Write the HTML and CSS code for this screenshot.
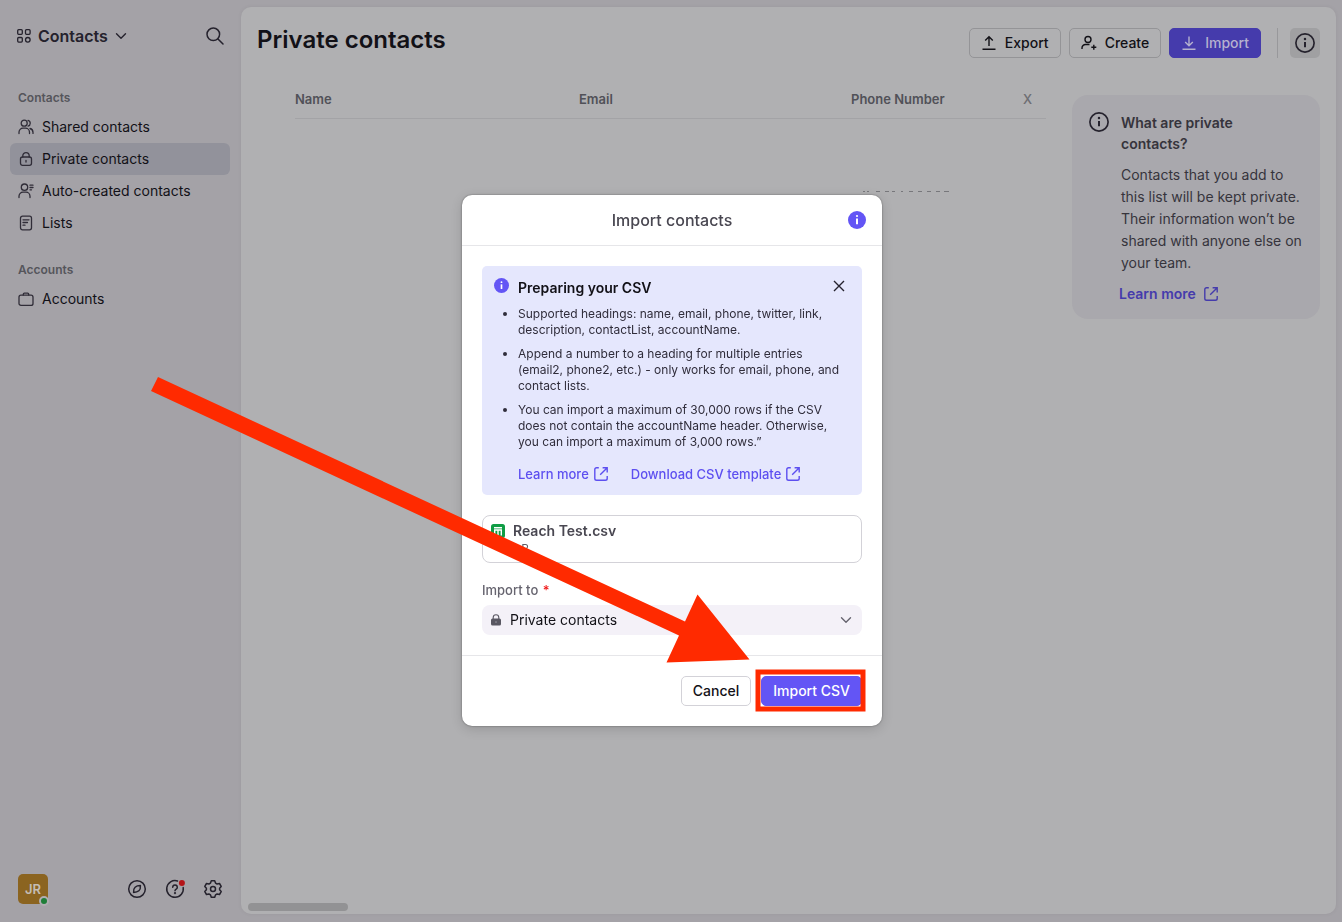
FILE: index.html
```html
<!DOCTYPE html>
<html lang="en">
<head>
<meta charset="utf-8">
<title>Private contacts</title>
<link rel="stylesheet" href="styles.css">
</head>
<body>
<svg class="defs" aria-hidden="true">
  <symbol id="info" viewBox="0 0 18 18"><circle cx="9" cy="9" r="8.2" fill="none" stroke="currentColor" stroke-width="1.5"/><path d="M9 8v4.8" fill="none" stroke="currentColor" stroke-width="1.8"/><circle cx="9" cy="5.4" r="1.1" fill="currentColor"/></symbol>
  <symbol id="info-solid" viewBox="0 0 18 18"><circle cx="9" cy="9" r="9" fill="#6355f5"/><path d="M9 7.6v5.6" stroke="#fff" stroke-width="2"/><circle cx="9" cy="5" r="1.1" fill="#fff"/></symbol>
  <symbol id="external" viewBox="0 0 14 14"><path d="M4.800.8H2.600Q.8.800.8 2.600V5M.8 8v3.400q0 1.800 1.800 1.800h8.800q1.800 0 1.800-1.800V9M8.600.8h4.600v4.600M13 1 6.200 7.800M.8 5v3" fill="none" stroke="currentColor" stroke-width="1.400"/></symbol>
  <symbol id="chevron" viewBox="0 0 12 12"><path d="m1.500 3.800 4.500 4.500 4.500-4.500" fill="none" stroke="currentColor" stroke-width="1.400" stroke-linecap="round" stroke-linejoin="round"/></symbol>
</svg>

<div class="app">
  <aside class="sidebar">
    <div class="sidebar-head">
      <button class="switcher" type="button">
        <svg width="14" height="14" viewBox="0 0 14 14" fill="none" stroke="currentColor" stroke-width="1.3"><rect x=".7" y=".7" width="4.600" height="4.600" rx="1"/><rect x="8.500" y=".7" width="4.600" height="4.600" rx="1"/><rect x=".7" y="8.500" width="4.600" height="4.600" rx="1"/><circle cx="10.800" cy="10.800" r="2.300"/></svg>
        <span>Contacts</span>
        <svg width="12" height="12"><use href="#chevron"/></svg>
      </button>
      <button class="icon-btn" type="button" aria-label="Search">
        <svg width="18" height="18" viewBox="0 0 18 18" fill="none" stroke="currentColor" stroke-width="1.500" stroke-linecap="round"><circle cx="7.300" cy="7.300" r="6.300"/><path d="m12 12 5 5"/></svg>
      </button>
    </div>
    <nav class="nav">
      <h2>Contacts</h2>
      <a href="#shared"><svg width="16" height="16" viewBox="0 0 16 16"><circle cx="6.200" cy="4.200" r="3"/><path d="M1 14.500v-1.300a4 4 0 0 1 4-4h2.500a4 4 0 0 1 4 4v1.300M10 1.300a3 3 0 0 1 0 5.800M12 9.500a4 4 0 0 1 3 3.900v1"/></svg>Shared contacts</a>
      <a href="#private" class="active"><svg width="16" height="16" viewBox="0 0 16 16"><rect x="2.500" y="6" width="11" height="8.300" rx="2"/><path d="M4.800 6V4.800a3.200 3.200 0 0 1 6.400 0V6M8 9.300v1.700"/></svg>Private contacts</a>
      <a href="#auto"><svg width="16" height="16" viewBox="0 0 16 16"><circle cx="6.500" cy="4.200" r="3.200"/><path d="M1 14.500v-1.300a4 4 0 0 1 4-4h3a4 4 0 0 1 4 4v1.300M12 2.200h3M12 4.500h3M12 6.800h1.500"/></svg>Auto-created contacts</a>
      <a href="#lists"><svg width="16" height="16" viewBox="0 0 16 16"><rect x="2.500" y="1.200" width="11" height="13.600" rx="2"/><path d="M5 4.800h6M5 7.500h4.500M5 10.200h2"/></svg>Lists</a>
      <h2>Accounts</h2>
      <a href="#accounts"><svg width="16" height="16" viewBox="0 0 16 16"><rect x="1" y="4.200" width="14" height="10.200" rx="2"/><path d="M5.300 4V3.200q0-1 1-1h3.400q1 0 1 1V4"/></svg>Accounts</a>
    </nav>
    <div class="sidebar-foot">
      <div class="avatar">JR<span class="presence"></span></div>
      <button class="icon-btn" type="button" aria-label="Explore"><svg width="20" height="20" viewBox="0 0 20 20" fill="none" stroke="currentColor" stroke-width="1.500" stroke-linejoin="round"><circle cx="10" cy="10" r="8.300"/><path d="M13.400 6.600q.3 3.600-1.500 5.200t-5.300 1.600q-.3-3.600 1.500-5.200t5.300-1.600Z"/></svg></button>
      <button class="icon-btn" type="button" aria-label="Help"><svg width="20" height="20" viewBox="0 0 20 20" fill="none" stroke="currentColor" stroke-width="1.500" stroke-linecap="round"><path d="M12.500 2A8.300 8.300 0 1 0 18.200 8.500"/><path d="M7.700 8.200a2.300 2.300 0 1 1 3.500 2q-1.200.7-1.200 1.600"/><circle cx="10" cy="14.200" r=".4"/><circle cx="16.900" cy="4" r="3" fill="#b41418" stroke="none"/></svg></button>
      <button class="icon-btn" type="button" aria-label="Settings"><svg width="20" height="20" viewBox="0 0 20 20" fill="none" stroke="currentColor" stroke-width="1.500" stroke-linejoin="round"><path d="M8.300 1.800h3.400l.8 2.300 1.600.9 2.400-.5 1.700 2.900L16.600 9.200v1.600l1.600 1.800-1.700 2.900-2.400-.5-1.600.9-.8 2.300H8.300l-.8-2.300-1.600-.9-2.400.5-1.700-2.900 1.600-1.800V9.200L1.800 7.400l1.700-2.900 2.400.5 1.600-.9Z"/><circle cx="10" cy="10" r="2.500"/></svg></button>
    </div>
  </aside>

  <main class="panel">
    <header class="panel-head">
      <h1>Private contacts</h1>
      <div class="actions">
        <button class="btn dim" type="button"><svg width="16" height="16" viewBox="0 0 16 16"><path d="M8 11V2M4.200 5.500 8 1.700l3.800 3.800M1.500 14.200h13"/></svg>Export</button>
        <button class="btn dim" type="button"><svg width="16" height="16" viewBox="0 0 16 16"><circle cx="7" cy="4.500" r="3"/><path d="M1 14v-1a3.500 3.500 0 0 1 3.500-3.500h4M12.800 9.800v5M10.300 12.300h5"/></svg>Create</button>
        <button class="btn dim-primary" type="button"><svg width="16" height="16" viewBox="0 0 16 16"><path d="M8 1.500v9M4.200 7 8 10.800 11.800 7M1.500 14.200h13"/></svg>Import</button>
        <span class="divider"></span>
        <button class="info-toggle" type="button" aria-label="About this page"><svg width="20" height="20"><use href="#info"/></svg></button>
      </div>
    </header>
    <div class="content">
      <div class="table-wrap">
        <table>
          <colgroup><col class="c-name"><col class="c-email"><col class="c-phone"><col></colgroup>
          <thead><tr><th>Name</th><th>Email</th><th>Phone Number</th><th class="faded">X</th></tr></thead>
          <tbody><tr><td></td><td></td><td><svg width="90" height="3" viewBox="0 0 90 3"><path d="M1 1.500h2M5 1.500h2M14 1.500h4M23 1.500h4M30 1.500h3M39 1.500h2M47 1.500h4M56 1.500h4M65 1.500h4M74 1.500h4M82 1.500h5" stroke="#77777b" fill="none"/></svg></td><td></td></tr></tbody>
        </table>
      </div>
      <section class="help">
        <svg width="20" height="20"><use href="#info"/></svg>
        <div>
          <h2>What are private contacts?</h2>
          <p>Contacts that you add to this list will be kept private. Their information won’t be shared with anyone else on your team.</p>
          <a href="#learn">Learn more <svg width="14" height="14"><use href="#external"/></svg></a>
        </div>
      </section>
    </div>
    <div class="scroll-thumb"></div>
  </main>
</div>

<div class="overlay">
  <section class="modal" role="dialog" aria-labelledby="modal-title">
    <header class="modal-head">
      <h2 id="modal-title">Import contacts</h2>
      <button type="button" aria-label="Information"><svg width="18" height="18"><use href="#info-solid"/></svg></button>
    </header>
    <div class="modal-body">
      <div class="callout">
        <svg class="callout-icon" width="15" height="15"><use href="#info-solid"/></svg>
        <div class="callout-main">
          <h3>Preparing your CSV</h3>
          <ul>
            <li>Supported headings: name, email, phone, twitter, link, description, contactList, accountName.</li>
            <li>Append a number to a heading for multiple entries (email2, phone2, etc.) - only works for email, phone, and contact lists.</li>
            <li>You can import a maximum of 30,000 rows if the CSV does not contain the accountName header. Otherwise, you can import a maximum of 3,000 rows.”</li>
          </ul>
          <div class="links">
            <a href="#learn-csv">Learn more <svg width="14" height="14"><use href="#external"/></svg></a>
            <a href="#template">Download CSV template <svg width="14" height="14"><use href="#external"/></svg></a>
          </div>
        </div>
        <button class="close" type="button" aria-label="Dismiss"><svg width="12" height="12" viewBox="0 0 12 12"><path d="m1 1 10 10M11 1 1 11" stroke="#25222e" stroke-width="1.400"/></svg></button>
      </div>
      <div class="file">
        <svg width="14" height="14" viewBox="0 0 14 14"><rect width="14" height="14" rx="2.500" fill="#0f9d45"/><path d="M3 3.700h8M3 6h8M3.700 6v5.500M7 6v5.500M10.300 6v5.500" stroke="#fff" stroke-width="1.400"/></svg>
        <div><strong>Reach Test.csv</strong><small>1 B</small></div>
      </div>
      <label for="target">Import to <span>*</span></label>
      <div class="select">
        <svg class="lock" width="10" height="12" viewBox="0 0 10 12"><rect y="4.500" width="10" height="7" rx="1.500" fill="#595762"/><path d="M2.200 5V3.600a2.800 2.800 0 0 1 5.600 0V5" fill="none" stroke="#595762" stroke-width="1.100"/><path d="M5 7.300v1.500" stroke="#a9a6b0"/></svg>
        <select id="target"><option>Private contacts</option></select>
        <svg class="caret" width="12" height="12"><use href="#chevron"/></svg>
      </div>
    </div>
    <footer class="modal-foot">
      <button class="btn" type="button">Cancel</button>
      <button class="btn primary" type="button">Import CSV</button>
    </footer>
  </section>
</div>

<svg class="annotation" aria-hidden="true">
  <path d="M158 377 685 621.500 697.500 594.500 749.500 659.500 666.500 662.500 679 635.500 151 391Z" fill="#ff2a00"/>
  <rect x="758" y="672" width="105" height="37" fill="none" stroke="#ff2a00" stroke-width="5"/>
</svg>
</body>
</html>
```
FILE: styles.css
```css
* { box-sizing: border-box; }
body { margin: 0; font: 14px/20px Inter, sans-serif; color: #121117; background: #a4a2a7; }
h1, h2, h3, p, ul { margin: 0; padding: 0; }
button, select { font: inherit; color: inherit; }
button { border: 0; padding: 0; background: none; }
a { color: inherit; text-decoration: none; }
svg { flex: none; display: block; }
.defs { position: absolute; width: 0; height: 0; }

.app { display: grid; grid-template-columns: 241px 1fr; height: 100vh; padding: 7px 6px 8px 0; }

.sidebar { display: flex; flex-direction: column; padding: 19px 11px 6px 10px; }
.sidebar-head { display: flex; justify-content: space-between; align-items: center; height: 20px; padding: 0 6px 0 7px; color: #25222d; }
.switcher { display: flex; align-items: center; gap: 7px; font-size: 16px; font-weight: 600; }
.icon-btn { color: #25222d; }
.nav { display: flex; flex-direction: column; margin-top: 40px; }
.nav h2 { padding: 3px 8px 4px; font-size: 12px; line-height: 18px; font-weight: 600; color: #55555b; }
.nav a + h2 { margin-top: 19px; }
.nav a { display: flex; align-items: center; gap: 8px; height: 32px; padding: 0 8px; border-radius: 6px; }
.nav a svg { fill: none; stroke: #302d38; stroke-width: 1.3; stroke-linecap: round; }
.nav a.active { background: #92929b; }
.sidebar-foot { display: flex; align-items: center; gap: 18px; margin-top: auto; padding: 4px 7px 4px 8px; }
.avatar { position: relative; width: 30px; height: 30px; margin-right: auto; border-radius: 5px; background: #8b6420; color: #c4bdb3; font-size: 13px; font-weight: 600; line-height: 30px; text-align: center; }
.presence { position: absolute; right: -1px; bottom: -2px; width: 10px; height: 10px; border: 2px solid #b0aeb2; border-radius: 50%; background: #1e7e38; }

.panel { display: flex; flex-direction: column; min-width: 0; border-radius: 10px; background: #b0b0b2; box-shadow: 0 0 4px rgba(0, 0, 0, .06); }
.panel-head { display: flex; justify-content: space-between; padding: 18px 16px 0; }
.panel-head h1 { font-size: 24px; line-height: 30px; font-weight: 600; }
.actions { display: flex; gap: 8px; padding-top: 3px; }
.btn { display: flex; align-items: center; gap: 8px; height: 30px; padding: 0 11px; border: 1px solid #d3d2d8; border-radius: 5px; background: #fff; font-weight: 500; }
.btn svg { fill: none; stroke: currentColor; stroke-width: 1.4; }
.btn.dim { border-color: #949497; background: none; }
.btn.dim-primary { border-color: #453bac; background: #453bac; color: #b5b1cf; }
.btn.primary { border-color: #6355f5; background: #6355f5; color: #fff; }
.divider { width: 1px; margin: 0 4px 0 8px; background: #98989b; }
.info-toggle { display: grid; place-items: center; width: 30px; border-radius: 5px; background: #a0a0a2; color: #25222d; }
.content { display: grid; grid-template-columns: 1fr 248px; align-items: start; gap: 26px; padding: 22px 16px 0 54px; }
table { width: 100%; table-layout: fixed; border-collapse: collapse; }
.c-name { width: 284px; }
.c-email { width: 272px; }
.c-phone { width: 172px; }
th { padding: 9px 0; border-bottom: 1px solid #a3a3a6; text-align: left; font-size: 13px; font-weight: 600; color: #515158; }
th.faded { font-weight: 500; color: #6e6e73; }
td { height: 74px; padding: 0 0 0 11px; vertical-align: bottom; }
.help { display: flex; gap: 12px; margin-top: 15px; padding: 17px 16px 15px 17px; border-radius: 16px; background: #a9a8ad; color: #36343c; }
.help > svg { color: #25222d; }
.help h2 { padding-right: 24px; font-size: 14px; line-height: 21px; font-weight: 600; }
.help p { margin: 10px 0; line-height: 22px; }
.help a { display: flex; align-items: center; gap: 8px; margin-left: -2px; font-weight: 600; color: #453bac; }
.scroll-thumb { width: 100px; height: 8px; margin: auto 0 3px 7px; border-radius: 4px; background: #929294; }

.overlay { position: fixed; inset: 0; display: grid; place-items: center; padding: 0 0 2px 2px; }
.modal { width: 420px; border-radius: 10px; background: #fff; box-shadow: 0 0 2px rgba(0, 0, 0, .45), 0 3px 12px rgba(0, 0, 0, .15); }
.modal-head { display: grid; grid-template-columns: 18px 1fr 18px; align-items: center; height: 51px; padding: 0 16px; border-bottom: 1px solid #e6e6e9; }
.modal-head h2 { grid-column: 2; font-size: 16px; font-weight: 500; text-align: center; color: #494751; }
.modal-body { display: flex; flex-direction: column; padding: 20px; }
.callout { display: flex; padding: 12px 16px 11px 12px; border-radius: 5px; background: #e5e7fd; color: #302d3b; }
.callout-icon { margin-right: 9px; }
.callout-main { flex: 1; }
.callout h3 { font-size: 14px; font-weight: 600; color: #121117; }
.callout ul { display: flex; flex-direction: column; gap: 8px; width: 328px; margin: 8px -30px 0 0; font-size: 12px; line-height: 16px; }
.links { display: flex; gap: 23px; margin-top: 14px; font-size: 13px; font-weight: 500; color: #5d4ff0; }
.links a { display: flex; align-items: center; gap: 5px; white-space: nowrap; }
.close { display: grid; place-items: center; align-self: flex-start; width: 14px; height: 16px; }
.file { display: flex; gap: 8px; height: 48px; margin-top: 20px; padding: 5px 8px; border: 1px solid #d3d2d8; border-radius: 8px; }
.file svg { margin-top: 3px; }
.file strong, .file small { display: block; }
.file strong { font-weight: 600; color: #494751; }
.file small { font-size: 12px; line-height: 16px; color: #5e5c66; }
.modal label { margin-top: 17px; font-size: 13px; font-weight: 500; color: #66646f; }
.modal label span { margin-left: 1px; color: #f01818; }
.select { display: grid; align-items: center; margin-top: 5px; }
.select > * { grid-area: 1 / 1; }
.select svg { z-index: 1; pointer-events: none; }
.select .lock { margin-left: 9px; }
.select .caret { justify-self: end; margin-right: 10px; color: #66646f; }
.select select { width: 100%; height: 30px; padding: 0 28px; border: 0; border-radius: 8px; background: #f4f1f8; appearance: none; }
.modal-foot { display: flex; justify-content: flex-end; gap: 10px; padding: 20px; border-top: 1px solid #e6e6e9; }
.annotation { position: fixed; top: 0; left: 0; width: 100%; height: 100%; pointer-events: none; }
```
